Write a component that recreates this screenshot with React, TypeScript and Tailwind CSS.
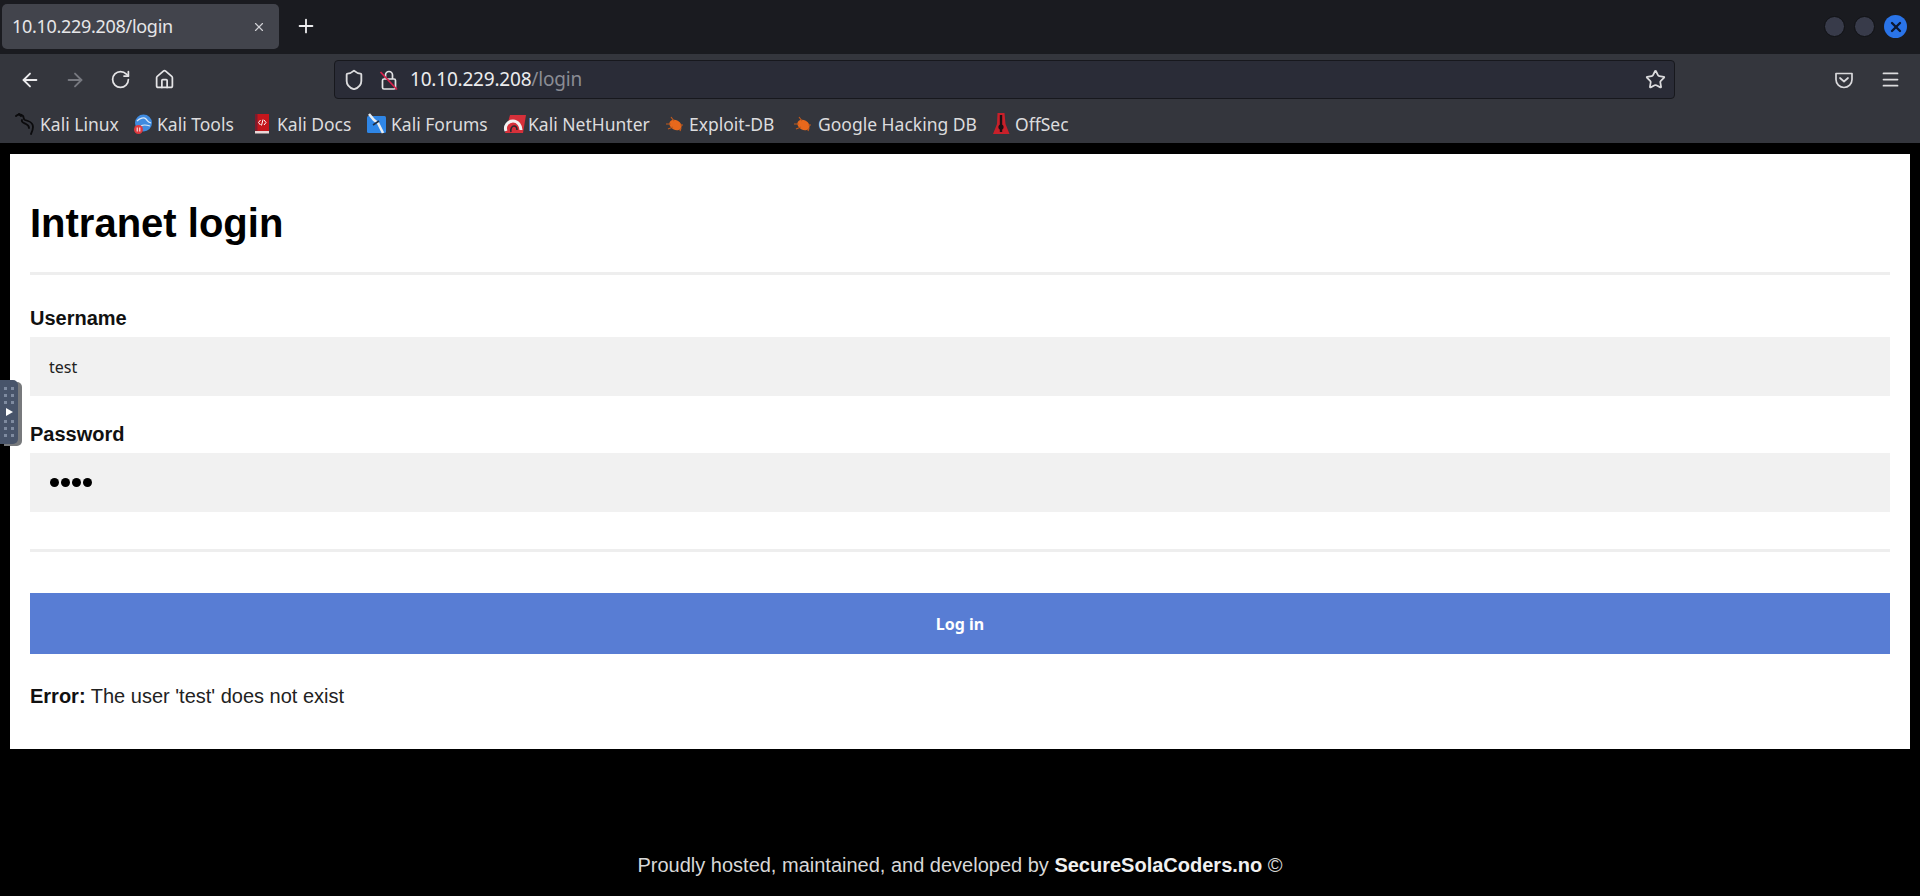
import { ArrowLeft, ArrowRight, Home, Menu, Plus, RotateCw, Shield, Star, X } from 'lucide-react'

const sans = 'font-["Liberation_Sans",Arial,sans-serif]'

function Dragon() {
  return (
    <svg width="20" height="22" viewBox="0 0 20 22" fill="none" stroke="#0b0b0d" strokeWidth="1.8" strokeLinecap="round">
      <path d="M1 3c2-2 5-2 7 0 1 1 0 3 2 4l3 1c3 1 5 3 5 6s-1 5-2 7" />
      <path d="M4 1l2 2M7 7c-1 2 2 3 4 4 2 1 3 2 3 4" />
    </svg>
  )
}

function ToolsIcon() {
  return (
    <svg width="20" height="22" viewBox="0 0 20 22">
      <circle cx="10.5" cy="10" r="8.5" fill="#3f8be0" />
      <path d="M4 8c3-3 7-4 9-2s1 3 5 4M8 13c3-2 6-1 9 0" stroke="#dbe9f8" strokeWidth="1.2" fill="none" />
      <circle cx="5.5" cy="16.5" r="4.5" fill="#e0393e" />
      <path d="M4.200 14.500v4M6.800 14.500v4" stroke="#fff" strokeWidth="1" />
    </svg>
  )
}

function DocsIcon() {
  return (
    <svg width="18" height="22" viewBox="0 0 18 22">
      <rect x="2" y="1" width="14" height="17" fill="#c4161c" />
      <rect x="2" y="1" width="2.500" height="17" fill="#7d1b2c" />
      <rect x="2" y="18" width="14" height="2.500" fill="#e8d7d7" />
      <path d="M7.500 7l-2 2.500 2 2.500M11 7l2 2.500-2 2.500M10 6.500l-1.500 6" stroke="#fff" strokeWidth="1" fill="none" />
    </svg>
  )
}

function ForumsIcon() {
  return (
    <svg width="22" height="22" viewBox="0 0 22 22">
      <rect x="1" y="3" width="19" height="17" rx="1.500" fill="#2f86e6" />
      <path d="M3 1l5 6 4 3 5 10" stroke="#e8edf2" strokeWidth="2.600" fill="none" />
      <path d="M7 12l6-4" stroke="#1c2c44" strokeWidth="1.600" />
    </svg>
  )
}

function HunterIcon() {
  return (
    <svg width="25" height="22" viewBox="0 0 25 22">
      <path d="M8 2h16l-3 18H3z" fill="#d6303a" />
      <path d="M4 18c-2-5 2-10 7-10s8 5 8 9" stroke="#f2f2f2" strokeWidth="3" fill="none" />
      <path d="M9 19c-1-3 1-6 3-6s3 2 3 4" stroke="#2a2a30" strokeWidth="1.600" fill="none" />
    </svg>
  )
}

function BugIcon() {
  return (
    <svg width="20" height="18" viewBox="0 0 20 18">
      <ellipse cx="10.500" cy="10" rx="6.500" ry="4.800" fill="#e8681c" transform="rotate(28 10.500 10)" />
      <path d="M1 9h5M6 2l3 4M3 14l5-2M15 16l1-3M18 10l-3 0" stroke="#c25a1d" strokeWidth="1.200" />
    </svg>
  )
}

function OffSecIcon() {
  return (
    <svg width="18" height="24" viewBox="0 0 18 24">
      <path d="M5.500 1h7l1 11 4 10H1l4-10z" fill="#c8202a" />
      <path d="M9 3v17" stroke="#1b1114" strokeWidth="2.400" />
      <circle cx="9" cy="15" r="2.600" fill="#1b1114" />
    </svg>
  )
}

function LockStrike() {
  return (
    <svg width="20" height="22" viewBox="0 0 20 22" fill="none">
      <rect x="3.500" y="10" width="13" height="10" rx="1.500" stroke="#e4e4e6" strokeWidth="1.700" />
      <path d="M6.500 10V6a3.500 3.500 0 0 1 7 0v4" stroke="#e4e4e6" strokeWidth="1.700" />
      <path d="M1.500 3L18 20.500" stroke="#d8204c" strokeWidth="1.800" />
    </svg>
  )
}

function PocketIcon() {
  return (
    <svg width="20" height="20" viewBox="0 0 20 20" fill="none" stroke="#d9d9dc" strokeWidth="1.700" strokeLinecap="round" strokeLinejoin="round">
      <path d="M2 3.500h16v6a8 8 0 0 1-16 0z" />
      <path d="M6 8l4 3.500L14 8" />
    </svg>
  )
}

const bookmarks = [
  { label: 'Kali Linux', icon: <Dragon />, iconBox: 'w-[25px] ml-[15px]', textWidth: 'w-[77px]' },
  { label: 'Kali Tools', icon: <ToolsIcon />, iconBox: 'w-[24px] ml-[16px]', textWidth: 'w-[79px]' },
  { label: 'Kali Docs', icon: <DocsIcon />, iconBox: 'w-[24px] ml-[17px]', textWidth: 'w-[73px]' },
  { label: 'Kali Forums', icon: <ForumsIcon />, iconBox: 'w-[25px] ml-[16px]', textWidth: 'w-[96px]' },
  { label: 'Kali NetHunter', icon: <HunterIcon />, iconBox: 'w-[26px] ml-[15px]', textWidth: 'w-[120px]' },
  { label: 'Exploit-DB', icon: <BugIcon />, iconBox: 'w-[24px] ml-[17px]', textWidth: 'w-[89px]' },
  { label: 'Google Hacking DB', icon: <BugIcon />, iconBox: 'w-[25px] ml-[15px]', textWidth: 'w-[157px]' },
  { label: 'OffSec', icon: <OffSecIcon />, iconBox: 'w-[23px] ml-[17px]', textWidth: 'w-[54px]' },
]

function Field({ label, children }: { label: string; children: React.ReactNode }) {
  return (
    <div>
      <div className="text-[20px] leading-[23px] font-bold text-[#111]">{label}</div>
      <div className="mt-[7px] h-[59px] bg-[#f1f1f1] flex items-center pl-[19px]">{children}</div>
    </div>
  )
}

export default function App() {
  return (
    <div className="relative w-[1920px] h-[896px] overflow-hidden bg-black flex flex-col font-['Noto_Sans',sans-serif]">
      {/* Tab strip */}
      <div className="h-[54px] bg-[#1a1b20] flex items-start shrink-0">
        <div className="ml-[2px] mt-[4px] w-[277px] h-[45px] rounded-[5px] bg-[#42444c] flex items-center pl-[10px] pr-[13px] justify-between">
          <span className="text-[18px] tracking-[-0.3px] text-[#e6e6e8]">10.10.229.208/login</span>
          <X size={14} color="#d0d0d4" />
        </div>
        <div className="ml-[16px] mt-[15px]">
          <Plus size={22} color="#ececee" />
        </div>
        <div className="ml-auto mt-[15px] mr-[13px] flex items-center gap-[9px]">
          <div className="w-[21px] h-[21px] rounded-full bg-[#383b4a] border border-[#101114]" />
          <div className="w-[21px] h-[21px] rounded-full bg-[#383b4a] border border-[#101114]" />
          <div className="w-[23px] h-[23px] rounded-full bg-[#2a74e8] flex items-center justify-center">
            <X size={16} color="#0c1830" strokeWidth={3.500} />
          </div>
        </div>
      </div>

      {/* Nav toolbar */}
      <div className="h-[45px] pt-[6px] bg-[#34363d] flex items-center shrink-0">
        <ArrowLeft size={22} color="#ececee" className="ml-[19px]" />
        <ArrowRight size={22} color="#777980" className="ml-[23px]" />
        <RotateCw size={21} color="#e4e4e6" className="ml-[24px]" />
        <Home size={21} color="#e4e4e6" className="ml-[23px]" />
        <div className="ml-[159px] w-[1341px] h-[39px] rounded-[4px] bg-[#2a2c37] border border-[#17181d] flex items-center">
          <Shield size={22} color="#dcdcde" className="ml-[8px]" />
          <div className="ml-[14px]">
            <LockStrike />
          </div>
          <span className="ml-[11px] text-[19px] tracking-[-0.2px] text-[#ececee]">
            10.10.229.208<span className="text-[#8a8c94]">/login</span>
          </span>
          <Star size={21} color="#dcdcde" className="ml-auto mr-[8px]" />
        </div>
        <div className="ml-[159px]">
          <PocketIcon />
        </div>
        <div className="ml-[26px]">
          <Menu size={21} color="#dcdcde" />
        </div>
      </div>

      {/* Bookmarks */}
      <div className="h-[44px] pt-[6px] bg-[#34363d] flex items-center shrink-0">
        {bookmarks.map(b => (
          <div key={b.label} className="flex items-center">
            <div className={`${b.iconBox} flex items-center`}>{b.icon}</div>
            <span className={`${b.textWidth} text-[17.5px] text-[#dcdcde] whitespace-nowrap`}>{b.label}</span>
          </div>
        ))}
      </div>

      {/* Page */}
      <main className={`mt-[11px] mx-[10px] h-[595px] bg-white px-[20px] pt-[46px] shrink-0 ${sans}`}>
        <h1 className="text-[40px] leading-[46px] font-bold text-black">Intranet login</h1>
        <hr className="mt-[26px] border-0 h-[3px] bg-[#eeeeee]" />
        <div className="mt-[32px] flex flex-col gap-[27px]">
          <Field label="Username">
            <span className="font-['Noto_Sans',sans-serif] text-[16px] text-[#222]">test</span>
          </Field>
          <Field label="Password">
            <div className="flex gap-[2px] pl-[1px]">
              {[0, 1, 2, 3].map(i => (
                <div key={i} className="w-[9px] h-[9px] rounded-full bg-black" />
              ))}
            </div>
          </Field>
        </div>
        <hr className="mt-[37px] border-0 h-[3px] bg-[#eeeeee]" />
        <div className="mt-[41px] h-[61px] bg-[#587dd4] flex items-center justify-center font-['Noto_Sans',sans-serif] text-[16px] font-bold text-white">
          Log in
        </div>
        <p className="mt-[31px] text-[20px] leading-[23px] text-[#222]">
          <b className="text-[#111]">Error:</b> The user 'test' does not exist
        </p>
      </main>

      {/* Footer */}
      <footer className={`mt-[105px] text-center text-[20px] leading-[23px] text-[#d8d8d8] ${sans}`}>
        Proudly hosted, maintained, and developed by <b className="text-[#f0f0f0]">SecureSolaCoders.no</b> ©
      </footer>

      {/* Sidebar handle sticking out over the page */}
      <div className="absolute left-0 top-[380px] w-[18px] h-[64px] rounded-r-[5px] bg-[#48546a] shadow-[4px_2px_0_#77797c] flex flex-col items-center justify-center gap-[2px]">
        <div className="grid grid-cols-2 gap-[4px]">
          {[0, 1, 2, 3, 4, 5].map(i => (
            <div key={i} className="w-[3px] h-[3px] bg-[#7f8ba0]" />
          ))}
        </div>
        <div className="w-0 h-0 border-y-[4px] border-y-transparent border-l-[7px] border-l-white my-[2px]" />
        <div className="grid grid-cols-2 gap-[4px]">
          {[0, 1, 2, 3, 4, 5].map(i => (
            <div key={i} className="w-[3px] h-[3px] bg-[#7f8ba0]" />
          ))}
        </div>
      </div>
    </div>
  )
}
